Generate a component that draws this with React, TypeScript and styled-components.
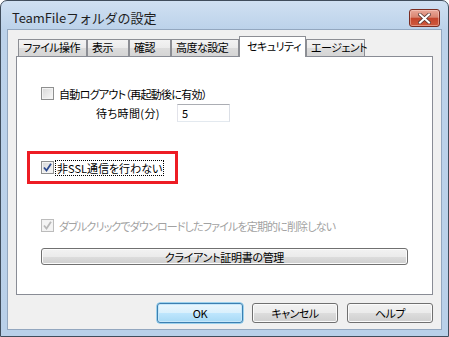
import React from "react";
import styled, { createGlobalStyle, css } from "styled-components";

const Global = createGlobalStyle`
  html, body { margin: 0; padding: 0; background: #ffffff; }
  body {
    font-family: "Noto Sans CJK JP", "Noto Sans", sans-serif;
    font-size: 11px;
    font-feature-settings: "palt" 1;
    color: #000;
  }
  * { box-sizing: border-box; }
`;

const Window = styled.div`
  width: 449px;
  height: 337px;
  border: 1px solid #404d5c;
  border-radius: 7px 7px 0 0;
  background: linear-gradient(to bottom, #d0e0f2 0px, #bcd2ea 28px, #b9d0e9 100%);
  display: flex;
  flex-direction: column;
  padding: 0 6px 6px 6px;
  overflow: hidden;
`;

const TitleBar = styled.div`
  height: 28px;
  display: flex;
  align-items: flex-start;
  padding-left: 5px;
  flex: none;
`;

const Title = styled.div`
  font-family: "Noto Sans CJK JP", "Noto Sans", sans-serif;
  font-feature-settings: "palt" 0;
  font-size: 13px;
  line-height: 16px;
  margin-top: 9px;
  color: #1e1e1e;
  flex: 1;
  letter-spacing: -0.1px;
`;

const CloseButton = styled.div`
  width: 31px;
  height: 18px;
  margin-top: 8px;
  margin-right: 2px;
  border: 1px solid #7a2d22;
  border-radius: 3px;
  background: linear-gradient(to bottom, #e9a899 0%, #d98571 45%, #c4452c 52%, #cf5a3e 100%);
  box-shadow: inset 0 0 0 1px rgba(255, 220, 210, 0.45);
  display: flex;
  align-items: center;
  justify-content: center;
`;

const Client = styled.div`
  flex: 1;
  background: #f0f0f0;
  border: 1px solid #93a7bf;
  display: flex;
  flex-direction: column;
  padding: 6px 8px 0 8px;
`;

const TabRow = styled.div`
  display: flex;
  align-items: flex-end;
  height: 20px;
  padding-left: 2px;
  position: relative;
  z-index: 1;
`;

const Tab = styled.div<{ $w: number; $active?: boolean }>`
  width: ${(p) => p.$w}px;
  height: 17px;
  border: 1px solid #8c8e94;
  border-bottom: none;
  background: linear-gradient(to bottom, #f3f3f3 0%, #ebebeb 50%, #dcdcdc 51%, #d5d5d5 100%);
  padding-left: 4px;
  font-size: 11px;
  letter-spacing: -0.5px;
  line-height: 15px;
  white-space: nowrap;
  ${(p) =>
    p.$active &&
    css`
      height: 21px;
      margin-bottom: -1px;
      background: #ffffff;
      padding-left: 7px;
      line-height: 18px;
    `}
`;

const Panel = styled.div`
  height: 239px;
  border: 1px solid #898c95;
  background: #ffffff;
  display: flex;
  flex-direction: column;
  padding: 29px 0 0 10px;
  flex: none;
`;

const CheckRow = styled.div<{ $mt?: number; $disabled?: boolean }>`
  display: flex;
  align-items: center;
  gap: 3px;
  margin-left: 14px;
  margin-top: ${(p) => p.$mt ?? 0}px;
  height: 15px;
  color: ${(p) => (p.$disabled ? "#a2a2a2" : "#000")};
  white-space: nowrap;
`;

const Box = styled.div<{ $disabled?: boolean }>`
  width: 13px;
  height: 13px;
  flex: none;
  border: 1px solid ${(p) => (p.$disabled ? "#bcbcbc" : "#8e8f8f")};
  background: ${(p) =>
    p.$disabled ? "#f4f4f4" : "linear-gradient(135deg, #d7d7d7 0%, #eaeaea 55%, #f9f9f9 100%)"};
  box-shadow: inset 0 0 0 1px #f3f3f3;
  display: flex;
  align-items: center;
  justify-content: center;
`;

const Label = styled.span<{ $focus?: boolean; $ls?: number }>`
  font-size: 11px;
  letter-spacing: ${(p) => p.$ls ?? -0.5}px;
  line-height: 14px;
  padding: 0 1px;
  border: 1px dotted ${(p) => (p.$focus ? "#000" : "transparent")};
`;

const FieldRow = styled.div`
  display: flex;
  align-items: center;
  margin-left: 69px;
  margin-top: 3px;
`;

const FieldLabel = styled.span`
  width: 81px;
  font-size: 11px;
  letter-spacing: 0.4px;
  white-space: nowrap;
`;

const Input = styled.div`
  width: 53px;
  height: 18px;
  border: 1px solid #abadb3;
  border-left-color: #e2e3ea;
  border-right-color: #dbdfe6;
  border-bottom-color: #e3e9ef;
  background: #fff;
  font-size: 11px;
  line-height: 16px;
  padding-left: 4px;
`;

const Highlight = styled.div`
  width: 151px;
  height: 33px;
  margin-top: 29px;
  border: 3px solid #ed1c24;
  display: flex;
  align-items: center;
  padding-left: 11px;
  & > ${CheckRow} {
    margin-left: 0;
    gap: 1px;
  }
`;

const WideButton = styled.div`
  width: 367px;
  height: 17px;
  margin-left: 14px;
  margin-top: 15px;
  border: 1px solid #707070;
  border-radius: 3px;
  background: linear-gradient(to bottom, #f2f2f2 0%, #ebebeb 50%, #dddddd 51%, #cfcfcf 100%);
  box-shadow: inset 0 0 0 1px #fbfbfb;
  display: flex;
  align-items: center;
  justify-content: center;
  font-size: 11px;
  letter-spacing: -0.3px;
  line-height: 14px;
`;

const ButtonRow = styled.div`
  display: flex;
  justify-content: flex-end;
  gap: 9px;
  margin-top: 8px;
`;

const DialogButton = styled.div<{ $default?: boolean }>`
  width: 86px;
  height: 20px;
  border: 1px solid ${(p) => (p.$default ? "#3c7fb1" : "#707070")};
  border-radius: 3px;
  background: ${(p) =>
    p.$default
      ? "linear-gradient(to bottom, #eaf6fd 0%, #d9f0fc 50%, #bee6fd 51%, #a7d9f5 100%)"
      : "linear-gradient(to bottom, #f2f2f2 0%, #ebebeb 50%, #dddddd 51%, #cfcfcf 100%)"};
  box-shadow: ${(p) =>
    p.$default ? "inset 0 0 0 1px #c6e7fa, 0 0 0 0.5px #48b2e8" : "inset 0 0 0 1px #fbfbfb"};
  display: flex;
  align-items: center;
  justify-content: center;
  font-size: 11px;
  letter-spacing: -0.5px;
  line-height: 14px;
`;

const Check = ({ color }: { color: string }) => (
  <svg width="9" height="9" viewBox="0 0 9 9">
    <path d="M1 4.5 L3.5 7.5 L8 0.8" fill="none" stroke={color} strokeWidth="1.8" />
  </svg>
);

const CloseX = () => (
  <svg width="13" height="11" viewBox="0 0 13 11">
    <path d="M2 1.5 L11 9.5 M11 1.5 L2 9.5" stroke="#5a3a36" strokeWidth="3.6" strokeLinecap="square" />
    <path d="M2 1.5 L11 9.5 M11 1.5 L2 9.5" stroke="#ffffff" strokeWidth="2" strokeLinecap="square" />
  </svg>
);

const tabs = [
  { label: "ファイル操作", w: 69 },
  { label: "表示", w: 42 },
  { label: "確認", w: 42 },
  { label: "高度な設定", w: 68 },
  { label: "セキュリティ", w: 67, active: true },
  { label: "エージェント", w: 59 },
];

export default function App() {
  return (
    <>
      <Global />
      <Window>
        <TitleBar>
          <Title>TeamFileフォルダの設定</Title>
          <CloseButton>
            <CloseX />
          </CloseButton>
        </TitleBar>
        <Client>
          <TabRow>
            {tabs.map((t) => (
              <Tab key={t.label} $w={t.w} $active={t.active}>
                {t.label}
              </Tab>
            ))}
          </TabRow>
          <Panel>
            <CheckRow>
              <Box />
              <Label $ls={-0.7}>自動ログアウト（再起動後に有効）</Label>
            </CheckRow>
            <FieldRow>
              <FieldLabel>待ち時間(分)</FieldLabel>
              <Input>5</Input>
            </FieldRow>
            <Highlight>
              <CheckRow>
                <Box>
                  <Check color="#2d4a8f" />
                </Box>
                <Label $focus $ls={0}>
                  非SSL通信を行わない
                </Label>
              </CheckRow>
            </Highlight>
            <CheckRow $mt={34} $disabled>
              <Box $disabled>
                <Check color="#b8b8b8" />
              </Box>
              <Label $ls={-0.85}>ダブルクリックでダウンロードしたファイルを定期的に削除しない</Label>
            </CheckRow>
            <WideButton>クライアント証明書の管理</WideButton>
          </Panel>
          <ButtonRow>
            <DialogButton $default>OK</DialogButton>
            <DialogButton>キャンセル</DialogButton>
            <DialogButton>ヘルプ</DialogButton>
          </ButtonRow>
        </Client>
      </Window>
    </>
  );
}
